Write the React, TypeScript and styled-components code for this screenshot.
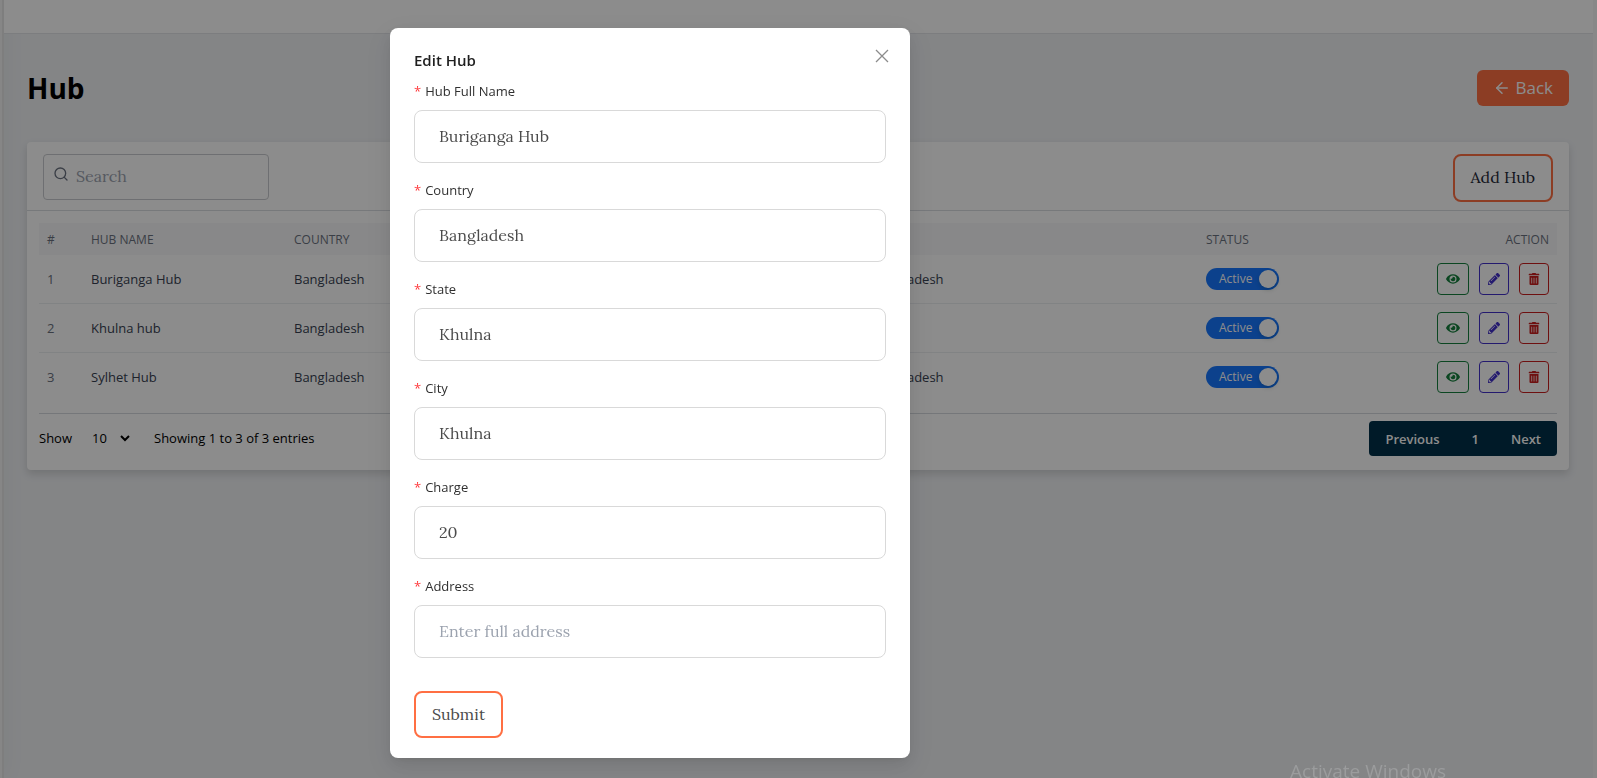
import React from "react";
import styled, { createGlobalStyle } from "styled-components";
import { FiArrowLeft, FiSearch } from "react-icons/fi";
import { FaEye, FaPencilAlt, FaTrashAlt } from "react-icons/fa";

const sans = `"Segoe UI", "Open Sans", "Noto Sans", sans-serif`;
const serif = `Lora, "Liberation Serif", serif`;

const GlobalStyle = createGlobalStyle`
  *, *::before, *::after { box-sizing: border-box; }
  body {
    margin: 0;
    overflow: hidden;
    background: #f0f2f5;
    font-family: ${sans};
    font-size: 13px;
    line-height: 22px;
    color: #000;
  }
  button, input, select { font: inherit; color: inherit; margin: 0; }
  h1, h2, p { margin: 0; }
`;

const Shell = styled.div`
  display: flex;
  min-height: 100vh;
`;

const SideRail = styled.aside`
  width: 4px;
  flex: none;
  background: #f5f5f5;
  border-right: 2px solid #e6e6e6;
  box-shadow: 0 0 20px rgba(0, 0, 0, 0.12);
`;

const Content = styled.div`
  flex: 1;
  min-width: 0;
  border-right: 4px solid #f7f7f7;
`;

const TopBar = styled.header`
  height: 34px;
  background: #fff;
  border-bottom: 1px solid #e2e4e8;
`;

const Main = styled.main`
  padding: 36px 24px 24px 23px;
`;

const PageHead = styled.div`
  display: flex;
  align-items: center;
  justify-content: space-between;
  margin-bottom: 36px;
`;

const PageTitle = styled.h1`
  font-size: 28px;
  line-height: 36px;
  font-weight: 700;
`;

const BackButton = styled.button`
  display: flex;
  align-items: center;
  gap: 4px;
  height: 36px;
  padding: 0 16px;
  border: 0;
  border-radius: 6px;
  background: #ff6f43;
  color: #fff;
  font-size: 17px;
`;

const Card = styled.section`
  background: #fff;
  border-radius: 4px;
  box-shadow: 0 4px 8px rgba(0, 0, 0, 0.14);
`;

const Toolbar = styled.div`
  display: flex;
  align-items: flex-start;
  justify-content: space-between;
  height: 69px;
  padding: 12px 16px 0;
  border-bottom: 1px solid #d9dce1;
`;

const SearchBox = styled.label`
  display: flex;
  align-items: center;
  gap: 7px;
  width: 226px;
  height: 46px;
  padding: 0 9px;
  border: 1px solid #c9cbcf;
  border-radius: 4px;
  color: #6b7280;

  svg { flex: none; margin-bottom: 6px; }
  input {
    width: 100%;
    border: 0;
    padding: 0 0 2px;
    outline: 0;
    background: none;
    font-family: ${serif};
    font-size: 16px;
  }
  input::placeholder { color: #9ca3af; }
`;

const OutlineButton = styled.button<{ $dark?: boolean }>`
  height: ${(p) => (p.$dark ? 48 : 47)}px;
  padding: 0 16px 2px;
  border: 2px solid #ff6f43;
  border-radius: 8px;
  background: #fff;
  color: ${(p) => (p.$dark ? "#1f2937" : "#4b4b4b")};
  font-family: ${serif};
  font-size: 16px;
`;

const CardBody = styled.div`
  padding: 12px 12px 14px;
`;

const Table = styled.table`
  width: 100%;
  table-layout: fixed;
  border-spacing: 0;
  text-align: left;

  thead tr { height: 32px; }
  th {
    padding: 2px 8px 0;
    background: #f8f8f9;
    font-size: 12px;
    font-weight: 500;
    text-transform: uppercase;
    color: #6b7280;
  }
  th:last-child { text-align: right; }
  td {
    height: 49px;
    padding: 0 8px;
    border-bottom: 1px solid #eceef1;
    color: #374151;
  }
  tbody tr:last-child td { border-bottom-color: transparent; }
  td:first-child { color: #6b7280; }
`;

const Column = styled.col<{ $width?: number }>`
  width: ${(p) => (p.$width ? `${p.$width}px` : "auto")};
`;

const Switch = styled.label`
  display: flex;
  align-items: center;
  justify-content: space-between;
  width: 73px;
  height: 22px;
  padding: 0 2px 0 13px;
  border-radius: 11px;
  background: #1677ff;
  color: #fff;
  font-size: 12px;

  input {
    appearance: none;
    width: 18px;
    height: 18px;
    margin: 0;
    border-radius: 50%;
    background: #fff;
    box-shadow: 0 2px 4px rgba(0, 35, 11, 0.2);
  }
`;

const Actions = styled.div`
  display: flex;
  justify-content: flex-end;
  gap: 10px;
`;

const IconButton = styled.button<{ $color: string }>`
  display: flex;
  align-items: center;
  justify-content: center;
  min-width: 30px;
  height: 32px;
  padding: 0 8px;
  border: 1px solid ${(p) => p.$color};
  border-radius: 4px;
  background: none;
  color: ${(p) => p.$color};
`;

const CardFooter = styled.div`
  display: flex;
  align-items: center;
  justify-content: space-between;
  margin-top: 11px;
  padding-top: 7px;
  border-top: 1px solid #d5d9de;
`;

const PageSize = styled.div`
  display: flex;
  align-items: center;
  gap: 16px;
  padding-bottom: 2px;

  select {
    width: 45px;
    height: 24px;
    border: 0;
    padding: 0;
    background: none;
  }
  p { margin-left: 5px; }
`;

const Pager = styled.nav`
  display: flex;
  height: 35px;
  border-radius: 4px;
  background: #003049;

  button {
    padding: 0 16px;
    border: 0;
    background: none;
    color: #fff;
    font-weight: 600;
  }
`;

const Overlay = styled.div`
  position: fixed;
  inset: 0;
  display: flex;
  justify-content: center;
  align-items: flex-start;
  padding: 28px 297px 0 0;
  background: rgba(0, 0, 0, 0.45);
`;

const Dialog = styled.section`
  position: relative;
  width: 520px;
  padding: 20px 24px;
  border-radius: 8px;
  background: #fff;
  box-shadow: 0 6px 16px rgba(0, 0, 0, 0.08), 0 3px 6px -4px rgba(0, 0, 0, 0.12),
    0 9px 28px 8px rgba(0, 0, 0, 0.05);
`;

const DialogTitle = styled.h2`
  margin-bottom: 8px;
  font-size: 15px;
  line-height: 24px;
  font-weight: 600;
  color: #1f1f1f;
`;

const CloseButton = styled.button`
  position: absolute;
  top: 17px;
  right: 17px;
  display: flex;
  align-items: center;
  justify-content: center;
  width: 22px;
  height: 22px;
  padding: 0;
  border: 0;
  background: none;
  color: #8c8c8c;
`;

const Form = styled.form`
  display: flex;
  flex-direction: column;
  align-items: flex-start;
  gap: 16px;

  ${OutlineButton} { margin-top: 17px; }
`;

const Field = styled.label`
  display: flex;
  flex-direction: column;
  gap: 8px;
  width: 100%;
  color: #303030;

  span::before {
    content: "*";
    margin-right: 4px;
    color: #ff3b3e;
  }
  input {
    width: 100%;
    height: 53px;
    padding: 0 24px 2px;
    border: 1px solid #d9d9d9;
    border-radius: 8px;
    background: #fff;
    color: #4b4b4b;
    font-family: ${serif};
    font-size: 16px;
  }
  input::placeholder { color: #9ca3af; }
`;

const Watermark = styled.div`
  position: fixed;
  right: 151px;
  bottom: -7px;
  color: #9b9c9d;
  font-size: 19px;
  line-height: 28px;
`;

const hubs = [
  { name: "Buriganga Hub", city: "Bangladesh" },
  { name: "Khulna hub", city: "" },
  { name: "Sylhet Hub", city: "Bangladesh" },
];

const fields = [
  { label: "Hub Full Name", value: "Buriganga Hub" },
  { label: "Country", value: "Bangladesh" },
  { label: "State", value: "Khulna" },
  { label: "City", value: "Khulna" },
  { label: "Charge", value: "20" },
  { label: "Address", value: "", placeholder: "Enter full address" },
];

function HubTable() {
  return (
    <Table>
      <colgroup>
        <Column $width={44} />
        <Column $width={203} />
        <Column />
        <Column $width={333} />
        <Column $width={120} />
        <Column $width={239} />
      </colgroup>
      <thead>
        <tr>
          <th>#</th>
          <th>Hub Name</th>
          <th>Country</th>
          <th aria-label="Address" />
          <th>Status</th>
          <th>Action</th>
        </tr>
      </thead>
      <tbody>
        {hubs.map((hub, i) => (
          <tr key={hub.name}>
            <td>{i + 1}</td>
            <td>{hub.name}</td>
            <td>Bangladesh</td>
            <td>{hub.city}</td>
            <td>
              <Switch>
                Active
                <input type="checkbox" defaultChecked />
              </Switch>
            </td>
            <td>
              <Actions>
                <IconButton $color="#15803d" aria-label="View"><FaEye size={14} /></IconButton>
                <IconButton $color="#4330ca" aria-label="Edit"><FaPencilAlt size={12} /></IconButton>
                <IconButton $color="#c81e1e" aria-label="Delete"><FaTrashAlt size={12} /></IconButton>
              </Actions>
            </td>
          </tr>
        ))}
      </tbody>
    </Table>
  );
}

function CloseIcon() {
  return (
    <svg width="14" height="14" viewBox="0 0 14 14" fill="none" stroke="currentColor" strokeWidth="1.3">
      <path d="M1 1l12 12M13 1L1 13" />
    </svg>
  );
}

function EditHubDialog() {
  return (
    <Dialog role="dialog" aria-labelledby="edit-hub-title">
      <DialogTitle id="edit-hub-title">Edit Hub</DialogTitle>
      <CloseButton aria-label="Close"><CloseIcon /></CloseButton>
      <Form onSubmit={(e) => e.preventDefault()}>
        {fields.map((f) => (
          <Field key={f.label}>
            <span>{f.label}</span>
            <input type="text" defaultValue={f.value} placeholder={f.placeholder} />
          </Field>
        ))}
        <OutlineButton type="submit">Submit</OutlineButton>
      </Form>
    </Dialog>
  );
}

export default function App() {
  return (
    <>
      <GlobalStyle />
      <Shell>
        <SideRail />
        <Content>
          <TopBar />
          <Main>
            <PageHead>
              <PageTitle>Hub</PageTitle>
              <BackButton><FiArrowLeft size={18} />Back</BackButton>
            </PageHead>
            <Card>
              <Toolbar>
                <SearchBox>
                  <FiSearch size={16} />
                  <input type="text" placeholder="Search" aria-label="Search" />
                </SearchBox>
                <OutlineButton $dark>Add Hub</OutlineButton>
              </Toolbar>
              <CardBody>
                <HubTable />
                <CardFooter>
                  <PageSize>
                    <label htmlFor="page-size">Show</label>
                    <select id="page-size" defaultValue="10">
                      <option>10</option>
                      <option>25</option>
                      <option>50</option>
                    </select>
                    <p>Showing 1 to 3 of 3 entries</p>
                  </PageSize>
                  <Pager aria-label="Pagination">
                    <button>Previous</button>
                    <button>1</button>
                    <button>Next</button>
                  </Pager>
                </CardFooter>
              </CardBody>
            </Card>
          </Main>
        </Content>
      </Shell>
      <Overlay>
        <EditHubDialog />
      </Overlay>
      <Watermark>Activate Windows</Watermark>
    </>
  );
}
